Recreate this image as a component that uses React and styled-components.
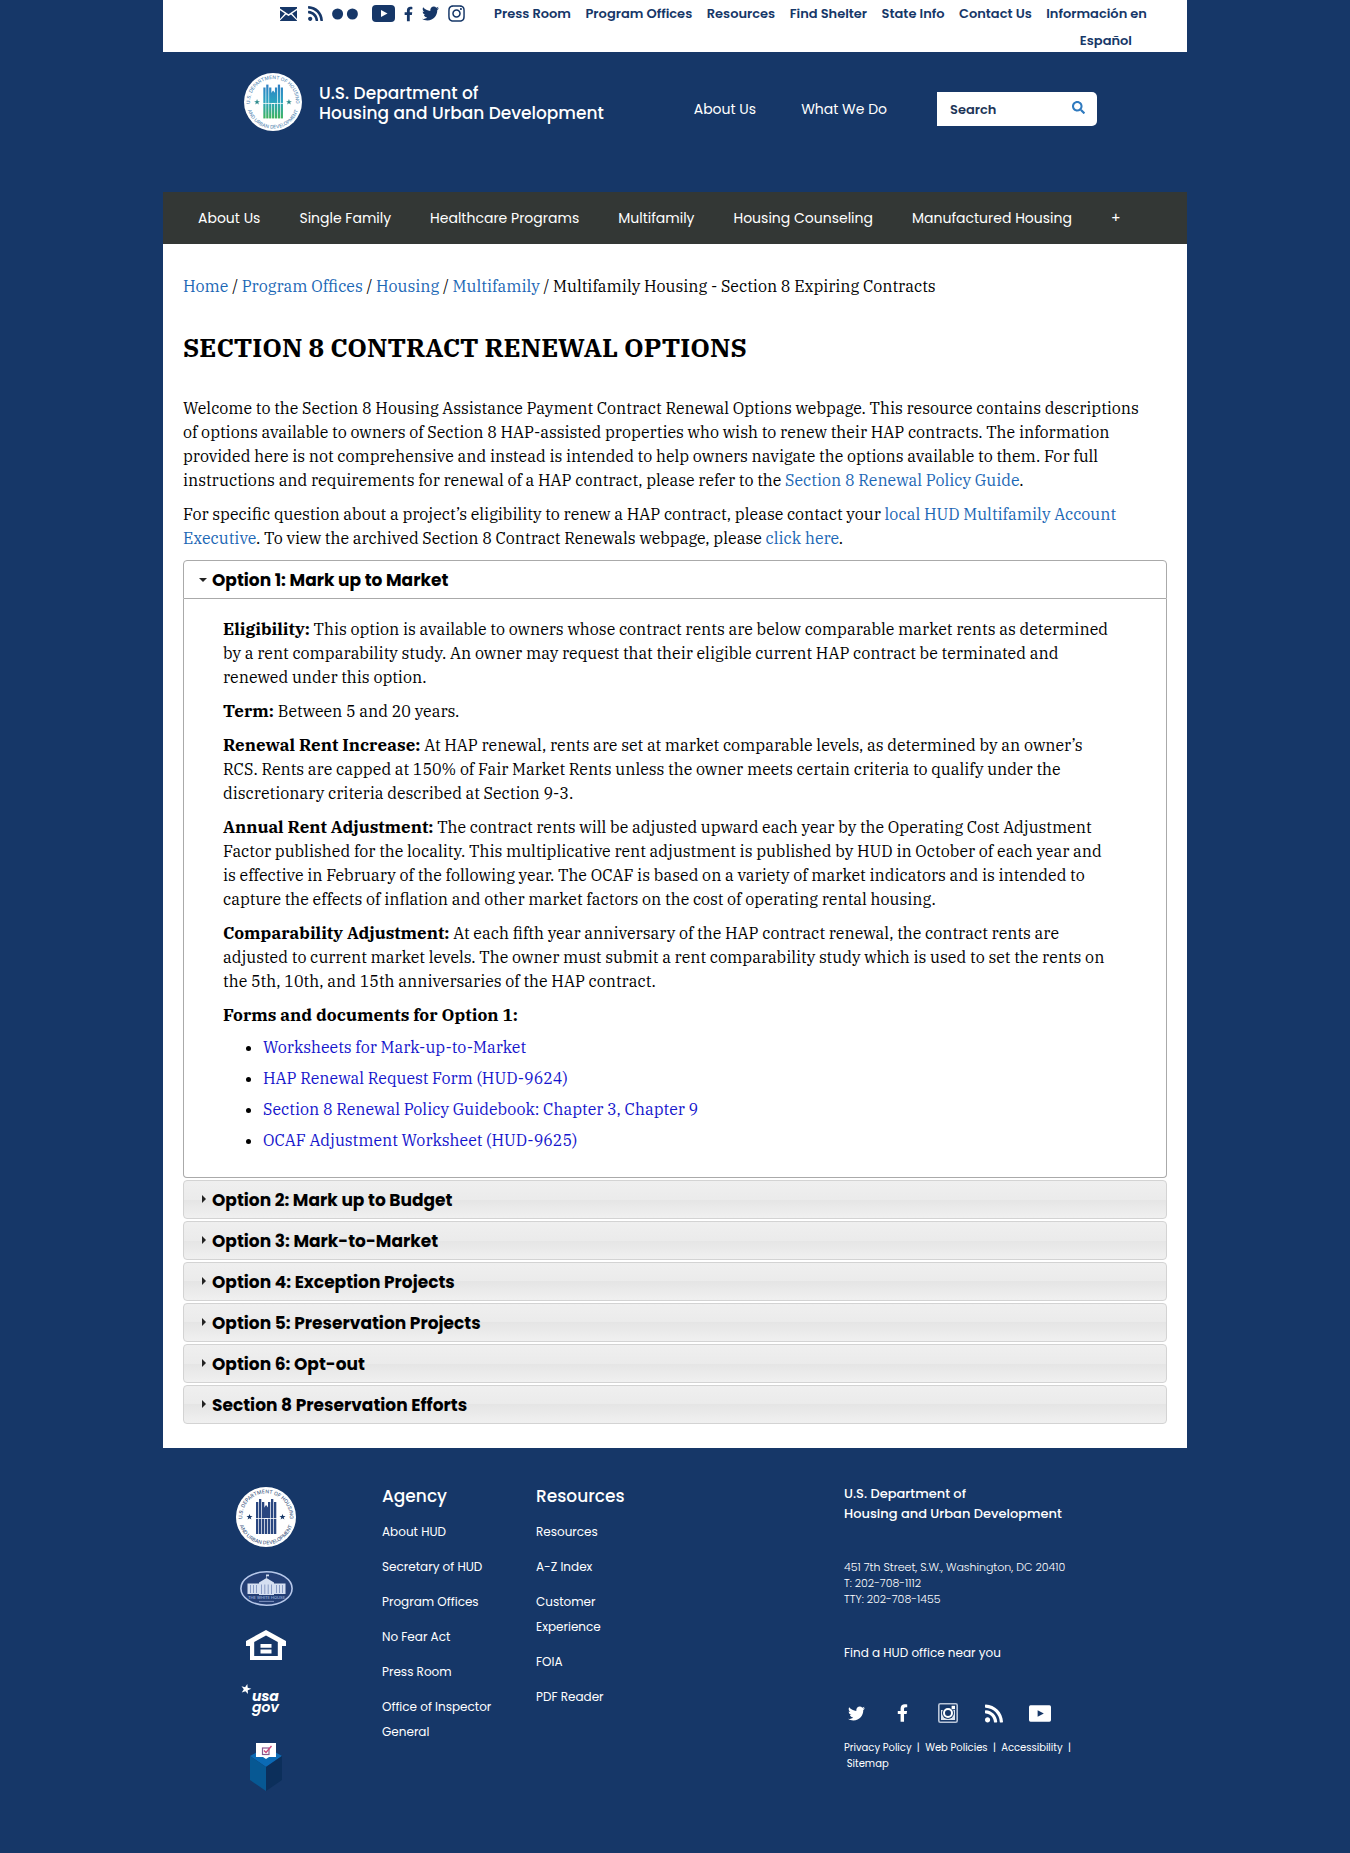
import React, { useState } from "react";
import styled, { createGlobalStyle, css } from "styled-components";
import {
  FaFacebookF,
  FaInstagram,
  FaRss,
  FaSearch,
  FaTwitter,
} from "react-icons/fa";

const navy = "#163768";
const linkBlue = "#1b67b5";
const sans = `Poppins, Inter, "Open Sans", sans-serif`;
const serif = `"IBM Plex Serif", "DejaVu Serif Condensed", "Liberation Serif", serif`;

const GlobalStyle = createGlobalStyle`
  *, *::before, *::after { box-sizing: border-box; }
  body {
    margin: 0;
    background: ${navy};
    color: #000;
    font-family: ${serif};
    font-size: 16px;
    line-height: 24px;
  }
  a { text-decoration: none; }
  a:hover { text-decoration: underline; }
`;

const Page = styled.div`
  max-width: 1024px;
  margin: 0 auto;
`;

const plainList = css`
  list-style: none;
  margin: 0;
  padding: 0;
`;

/* ---------- utility bar ---------- */

const UtilityBar = styled.div`
  display: flex;
  align-items: flex-start;
  gap: 29px;
  height: 52px;
  padding-left: 117px;
  padding-right: 40px;
  background: #fff;
  color: ${navy};
`;

const SocialList = styled.ul`
  ${plainList}
  display: flex;
  align-items: center;
  gap: 9px;
  height: 27px;

  a {
    display: block;
    color: inherit;
  }
  svg {
    display: block;
  }
`;

const IconSlot = styled.li`
  svg {
    width: ${(p) => p.$w}px;
    height: ${(p) => p.$h}px;
  }
`;

const UtilityLinks = styled.ul`
  ${plainList}
  flex: 1;
  display: flex;
  justify-content: space-between;
  font: 600 13px/27px ${sans};
  white-space: nowrap;

  a {
    color: inherit;
  }
`;

const TwoLineItem = styled.li`
  text-align: right;

  a {
    padding-right: 15px;
  }
`;

/* ---------- masthead ---------- */

const Masthead = styled.header`
  display: flex;
  align-items: flex-start;
  justify-content: space-between;
  min-height: 140px;
  padding: 21px 90px 20px 81px;
  color: #fff;
  font-family: ${sans};
`;

const Brand = styled.a`
  display: flex;
  align-items: center;
  gap: 17px;
  color: #fff;
  font-weight: 500;
  font-size: 17px;
  line-height: 20px;
`;

const BrandName = styled.span`
  padding-top: 2px;
`;

const MastheadTools = styled.div`
  display: flex;
  align-items: center;
  gap: 50px;
  margin-top: 19px;
`;

const MainMenu = styled.nav`
  display: flex;
  gap: 45px;
  font-size: 14px;

  a {
    color: #fff;
  }
`;

const SearchForm = styled.form`
  display: flex;
  width: 160px;
  height: 34px;
  border-radius: 0 5px 5px 0;
  background: #fff;
  overflow: hidden;
`;

const SearchInput = styled.input`
  flex: 1;
  min-width: 0;
  padding: 2px 0 0 13px;
  border: 0;
  background: transparent;
  color: ${navy};
  font: 600 13px/20px ${sans};

  &::placeholder {
    color: #1d3557;
    opacity: 1;
  }
`;

const SearchButton = styled.button`
  display: grid;
  place-items: center;
  width: 38px;
  padding: 0 0 3px;
  border: 0;
  background: transparent;
  color: #2f7abf;
  font-size: 13px;
  cursor: pointer;
`;

const SectionNav = styled.nav`
  display: flex;
  gap: 39px;
  padding: 0 35px;
  background: #333735;
  font: 400 14px/52px ${sans};

  a {
    color: #fff;
  }
`;

/* ---------- content ---------- */

const Content = styled.main`
  padding: 30px 20px 24px;
  background: #fff;
`;

const TextLink = styled.a`
  color: ${linkBlue};
`;

const Title = styled.h1`
  margin: 33px 0;
  font-size: 26px;
  line-height: 32px;
  font-weight: 700;
`;

const Paragraph = styled.p`
  margin: 0 0 10px;
  padding-right: 12px;
`;

const Label = styled.strong`
  font-size: 17px;
  font-weight: 700;
`;

const Accordion = styled.div`
  display: flex;
  flex-direction: column;
  gap: 2px;
`;

const AccordionHeading = styled.h2`
  margin: 0;
  font: inherit;
`;

const AccordionButton = styled.button`
  display: flex;
  align-items: center;
  gap: 4px;
  width: 100%;
  height: 39px;
  padding: 0 14px;
  border: 1px solid ${(p) => (p.$open ? "#aaa" : "#d3d3d3")};
  border-radius: ${(p) => (p.$open ? "4px 4px 0 0" : "4px")};
  background: ${(p) =>
    p.$open
      ? "#fff"
      : "linear-gradient(#efefef, #ebebeb 50%, #e5e5e5 50%, #f0f0f0)"};
  color: #000;
  font: 700 17px/24px ${sans};
  text-align: left;
  cursor: pointer;
`;

const Caret = styled.svg`
  width: 10px;
  height: 10px;
  margin-bottom: 2px;
  fill: #222;
  transform: rotate(${(p) => (p.$open ? "90deg" : "0deg")});
`;

const Panel = styled.div`
  padding: 18px 39px 25px;
  border: 1px solid #aaa;
  border-top: 0;
  border-radius: 0 0 4px 4px;
`;

const DocumentList = styled.ul`
  display: flex;
  flex-direction: column;
  gap: 7px;
  margin: -2px 0 0;
  padding-left: 40px;

  a {
    color: #1414cc;
  }
`;

/* ---------- footer ---------- */

const Footer = styled.footer`
  display: grid;
  grid-template-columns: 146px 154px 308px 1fr;
  padding: 36px 0 50px 73px;
  color: #fff;
  font-family: ${sans};

  a {
    color: #fff;
  }
`;

const LogoStack = styled.div`
  display: flex;
  flex-direction: column;
  align-items: center;
  gap: 24px;
  width: 60px;
  padding-top: 3px;

  svg {
    display: block;
  }
`;

const FooterHeading = styled.h3`
  margin: 0 0 10px;
  font-weight: 500;
  font-size: 17px;
  line-height: 25px;
`;

const FooterLinks = styled.ul`
  ${plainList}
  display: flex;
  flex-direction: column;
  gap: 10px;
  max-width: 120px;
  font-size: 12px;
  line-height: 25px;
`;

const Contact = styled.div`
  max-width: 240px;
`;

const ContactName = styled.p`
  margin: 0 0 35px;
  font-weight: 500;
  font-size: 13px;
  line-height: 20px;
`;

const Address = styled.address`
  margin: 0 0 36px;
  font: 300 11px/16px ${sans};
`;

const OfficeFinder = styled.p`
  margin: 0 0 39px;
  font-size: 12px;
  line-height: 20px;
`;

const FooterSocial = styled.ul`
  ${plainList}
  display: grid;
  grid-template-columns: repeat(5, 24px);
  justify-items: center;
  align-items: center;
  gap: 22px;
  height: 22px;
  margin-bottom: 16px;

  svg {
    display: block;
  }
`;

const LegalLinks = styled.p`
  margin: 0;
  font-size: 10px;
  line-height: 16px;
`;

/* ---------- drawings ---------- */

const EnvelopeIcon = () => (
  <svg viewBox="0 0 19 14" fill={navy} aria-hidden="true">
    <path d="M0 0H17V1.4L8.5 7.2L0 1.4Z" />
    <path d="M0 3.2L4.9 6.6L0 12Z" />
    <path d="M17 3.2L12.1 6.6L17 12Z" />
    <path d="M6 7.4L8.5 9.1L11 7.4L17 13.4V14H0V13.4Z" />
  </svg>
);

const FlickrIcon = () => (
  <svg viewBox="0 0 31 12" fill={navy} aria-hidden="true">
    <circle cx="5.6" cy="6" r="5.5" />
    <circle cx="20.4" cy="6" r="5.5" />
  </svg>
);

const YoutubeIcon = ({ cut }) => (
  <svg viewBox="0 0 23 17" aria-hidden="true">
    <rect width="23" height="17" rx={cut === "#fff" ? 4 : 1.6} fill="currentColor" />
    <path d="M9 5L15.5 8.5L9 12Z" fill={cut} />
  </svg>
);

const CameraIcon = () => (
  <svg viewBox="0 0 20 20" aria-hidden="true">
    <rect x="0.8" y="0.8" width="18.4" height="18.4" rx="1.5" fill={navy} stroke="#b9c5d8" strokeWidth="1.6" />
    <path d="M3 7H17V17H3Z" fill="#dfe6f0" />
    <circle cx="10" cy="10" r="6" fill={navy} />
    <circle cx="10" cy="10" r="4" fill="none" stroke="#fff" strokeWidth="2" />
    <rect x="13.6" y="2.8" width="3.4" height="3.4" fill="#fff" />
  </svg>
);

const star = "M0 -3L0.8 -0.9L3 -0.9L1.2 0.5L1.9 2.6L0 1.3L-1.9 2.6L-1.2 0.5L-3 -0.9L-0.8 -0.9Z";

/* Department seal: ring lettering, two stars and a building of vertical bars. */
function Seal({ id, size, ink, bars, starInk }) {
  const columns = [
    [20, 15],
    [23, 12],
    [26, 15],
    [32, 15],
    [35, 12],
    [38, 15],
  ];
  return (
    <svg width={size} height={size} viewBox="0 0 60 60" role="img" aria-label="HUD seal">
      <defs>
        <linearGradient id={`${id}-bars`} gradientUnits="userSpaceOnUse" x1="0" y1="12" x2="0" y2="47">
          <stop offset="0" stopColor={bars[0]} />
          <stop offset="0.5" stopColor={bars[1]} />
          <stop offset="1" stopColor={bars[2]} />
        </linearGradient>
        <path id={`${id}-top`} d="M10.2 43A23.7 23.7 0 1 1 49.8 43" />
        <path id={`${id}-bottom`} d="M2.5 30A27.5 27.5 0 0 0 57.5 30" />
      </defs>
      <circle cx="30" cy="30" r="30" fill="#fff" />
      <g fill={ink} fontFamily="Inter, sans-serif" fontSize="5" fontWeight="500">
        <text textAnchor="middle">
          <textPath href={`#${id}-top`} startOffset="50%">U.S. DEPARTMENT OF HOUSING</textPath>
        </text>
        <text textAnchor="middle">
          <textPath href={`#${id}-bottom`} startOffset="50%">AND URBAN DEVELOPMENT</textPath>
        </text>
      </g>
      <g fill={`url(#${id}-bars)`}>
        {columns.map(([x, y]) => (
          <rect key={x} x={x} y={y} width="2.3" height={47 - y} />
        ))}
        <rect x="29" y="32" width="2.3" height="15" />
        <path d="M27.8 31V21L30.1 18L32.4 21V31Z" />
      </g>
      <path d="M19.5 31.5H41" stroke="#fff" strokeWidth="0.8" />
      <path d={star} fill={starInk} transform="translate(13.5 30)" />
      <path d={star} fill={starInk} transform="translate(46.5 30)" />
    </svg>
  );
}

const WhiteHouseLogo = () => (
  <svg width="53" height="35" viewBox="0 0 53 35" role="img" aria-label="The White House">
    <ellipse cx="26.5" cy="17.5" rx="25.6" ry="16.7" fill="#243f75" stroke="#b7c8ea" strokeWidth="1.6" />
    <g fill="#d5dff1">
      <path d="M7.5 12.5H45.5V23H7.5Z" />
      <path d="M19 11.5L26.5 7L34 11.5V24H19Z" />
      <path d="M26 3.6H29V5.2H26.6V7H26Z" />
    </g>
    <path
      d="M10.5 14V22M13.5 14V22M16.5 14V22M21.5 13.5V23M24.8 13.5V23M28.2 13.5V23M31.5 13.5V23M36.5 14V22M39.5 14V22M42.5 14V22"
      stroke="#7f93c0"
      strokeWidth="0.9"
    />
    <text x="26.5" y="28" textAnchor="middle" fontFamily="Inter, sans-serif" fontSize="4" fill="#b7c8ea">
      THE WHITE HOUSE
    </text>
    <path d="M19 30.4H34" stroke="#7f93c0" strokeWidth="1" />
  </svg>
);

const EqualHousingLogo = () => (
  <svg width="40" height="30" viewBox="0 0 40 30" role="img" aria-label="Equal housing opportunity">
    <path
      fill="#fff"
      fillRule="evenodd"
      d="M20 0L40 11V16H36V30H4V16H0V11ZM20 5.4L8.2 12V26H31.8V12Z"
    />
    <path fill="#fff" d="M14.5 14H25.5V17.8H14.5ZM14.5 19.6H25.5V23.4H14.5Z" />
  </svg>
);

const UsaGovLogo = () => (
  <svg width="50" height="35" viewBox="0 0 50 35" role="img" aria-label="USA.gov">
    <path d={star} fill="#fff" transform="translate(5 5) rotate(15) scale(1.7)" />
    <g fill="#fff" fontFamily={sans} fontStyle="italic">
      <text x="11" y="17" fontSize="14" fontWeight="700">usa</text>
      <text x="11" y="28" fontSize="14" fontWeight="600">gov</text>
    </g>
  </svg>
);

const BallotBoxLogo = () => (
  <svg width="34" height="48" viewBox="0 0 34 48" role="img" aria-label="Vote">
    <path d="M1 13L17 4L33 13L17 24Z" fill="#0b6ab5" />
    <path d="M1 13L17 24V48L1 37Z" fill="#075893" />
    <path d="M33 13L17 24V48L33 37Z" fill="#0c2f5b" />
    <path d="M7 0H27V14H20L17 16L14 14H7Z" fill="#fff" />
    <rect x="13.5" y="5" width="6.5" height="6.5" fill="none" stroke="#8a5a8f" strokeWidth="1.2" />
    <path d="M15 7.5L17 9.5L22.5 3" fill="none" stroke="#d0487c" strokeWidth="1.4" />
  </svg>
);

/* ---------- data ---------- */

const utilityLinks = [
  "Press Room",
  "Program Offices",
  "Resources",
  "Find Shelter",
  "State Info",
  "Contact Us",
];

const sectionLinks = [
  "About Us",
  "Single Family",
  "Healthcare Programs",
  "Multifamily",
  "Housing Counseling",
  "Manufactured Housing",
  "+",
];

const crumbs = ["Home", "Program Offices", "Housing", "Multifamily"];

const agencyLinks = [
  "About HUD",
  "Secretary of HUD",
  "Program Offices",
  "No Fear Act",
  "Press Room",
  "Office of Inspector General",
];

const resourceLinks = [
  "Resources",
  "A-Z Index",
  "Customer Experience",
  "FOIA",
  "PDF Reader",
];

const markUpToMarket = [
  [
    "Eligibility:",
    "This option is available to owners whose contract rents are below comparable market rents as determined by a rent comparability study. An owner may request that their eligible current HAP contract be terminated and renewed under this option.",
  ],
  ["Term:", "Between 5 and 20 years."],
  [
    "Renewal Rent Increase:",
    "At HAP renewal, rents are set at market comparable levels, as determined by an owner’s RCS. Rents are capped at 150% of Fair Market Rents unless the owner meets certain criteria to qualify under the discretionary criteria described at Section 9-3.",
  ],
  [
    "Annual Rent Adjustment:",
    "The contract rents will be adjusted upward each year by the Operating Cost Adjustment Factor published for the locality. This multiplicative rent adjustment is published by HUD in October of each year and is effective in February of the following year. The OCAF is based on a variety of market indicators and is intended to capture the effects of inflation and other market factors on the cost of operating rental housing.",
  ],
  [
    "Comparability Adjustment:",
    "At each fifth year anniversary of the HAP contract renewal, the contract rents are adjusted to current market levels. The owner must submit a rent comparability study which is used to set the rents on the 5th, 10th, and 15th anniversaries of the HAP contract.",
  ],
];

const documents = [
  "Worksheets for Mark-up-to-Market",
  "HAP Renewal Request Form (HUD-9624)",
  "Section 8 Renewal Policy Guidebook: Chapter 3, Chapter 9",
  "OCAF Adjustment Worksheet (HUD-9625)",
];

const MarkUpToMarket = () => (
  <Panel>
    {markUpToMarket.map(([label, text]) => (
      <Paragraph key={label}>
        <Label>{label}</Label> {text}
      </Paragraph>
    ))}
    <Paragraph>
      <Label>Forms and documents for Option 1:</Label>
    </Paragraph>
    <DocumentList>
      {documents.map((name) => (
        <li key={name}>
          <a href="#document">{name}</a>
        </li>
      ))}
    </DocumentList>
  </Panel>
);

const options = [
  { title: "Option 1: Mark up to Market", Body: MarkUpToMarket },
  { title: "Option 2: Mark up to Budget" },
  { title: "Option 3: Mark-to-Market" },
  { title: "Option 4: Exception Projects" },
  { title: "Option 5: Preservation Projects" },
  { title: "Option 6: Opt-out" },
  { title: "Section 8 Preservation Efforts" },
];

function SocialLink({ label, w, h, children }) {
  return (
    <IconSlot $w={w} $h={h}>
      <a href="#social" aria-label={label}>
        {children}
      </a>
    </IconSlot>
  );
}

function LinkColumn({ heading, links }) {
  return (
    <div>
      <FooterHeading>{heading}</FooterHeading>
      <FooterLinks>
        {links.map((name) => (
          <li key={name}>
            <a href="#footer">{name}</a>
          </li>
        ))}
      </FooterLinks>
    </div>
  );
}

export default function App() {
  const [open, setOpen] = useState(0);

  return (
    <Page>
      <GlobalStyle />
      <UtilityBar>
        <SocialList>
          <SocialLink label="Email" w={19} h={14}><EnvelopeIcon /></SocialLink>
          <SocialLink label="RSS" w={15} h={17}><FaRss /></SocialLink>
          <SocialLink label="Flickr" w={31} h={12}><FlickrIcon /></SocialLink>
          <SocialLink label="YouTube" w={23} h={17}><YoutubeIcon cut="#fff" /></SocialLink>
          <SocialLink label="Facebook" w={9} h={16}><FaFacebookF /></SocialLink>
          <SocialLink label="Twitter" w={17} h={17}><FaTwitter /></SocialLink>
          <SocialLink label="Instagram" w={17} h={19}><FaInstagram /></SocialLink>
        </SocialList>
        <UtilityLinks>
          {utilityLinks.map((name) => (
            <li key={name}>
              <a href="#utility">{name}</a>
            </li>
          ))}
          <TwoLineItem>
            <a href="#espanol" lang="es">
              Información en
              <br />
              Español
            </a>
          </TwoLineItem>
        </UtilityLinks>
      </UtilityBar>

      <Masthead>
        <Brand href="#home">
          <Seal id="seal-top" size={58} ink="#5f8fb8" starInk="#2c8a8c" bars={["#2f7fc4", "#2aa3c0", "#3fb45c"]} />
          <BrandName>
            U.S. Department of
            <br />
            Housing and Urban Development
          </BrandName>
        </Brand>
        <MastheadTools>
          <MainMenu>
            <a href="#about">About Us</a>
            <a href="#what">What We Do</a>
          </MainMenu>
          <SearchForm role="search" onSubmit={(e) => e.preventDefault()}>
            <SearchInput type="text" placeholder="Search" aria-label="Search" />
            <SearchButton type="submit" aria-label="Submit search">
              <FaSearch />
            </SearchButton>
          </SearchForm>
        </MastheadTools>
      </Masthead>

      <SectionNav>
        {sectionLinks.map((name) => (
          <a key={name} href="#section">{name}</a>
        ))}
      </SectionNav>

      <Content>
        <nav aria-label="Breadcrumb">
          {crumbs.map((name) => (
            <React.Fragment key={name}>
              <TextLink href="#crumb">{name}</TextLink>
              {" / "}
            </React.Fragment>
          ))}
          Multifamily Housing - Section 8 Expiring Contracts
        </nav>
        <Title>SECTION 8 CONTRACT RENEWAL OPTIONS</Title>
        <Paragraph>
          Welcome to the Section 8 Housing Assistance Payment Contract Renewal Options webpage.
          This resource contains descriptions of options available to owners of Section 8
          HAP-assisted properties who wish to renew their HAP contracts. The information provided
          here is not comprehensive and instead is intended to help owners navigate the options
          available to them. For full instructions and requirements for renewal of a HAP contract,
          please refer to the <TextLink href="#guide">Section 8 Renewal Policy Guide</TextLink>.
        </Paragraph>
        <Paragraph>
          For specific question about a project’s eligibility to renew a HAP contract, please
          contact your{" "}
          <TextLink href="#executive">local HUD Multifamily Account Executive</TextLink>. To view
          the archived Section 8 Contract Renewals webpage, please{" "}
          <TextLink href="#archive">click here</TextLink>.
        </Paragraph>

        <Accordion>
          {options.map(({ title, Body }, index) => {
            const isOpen = open === index;
            return (
              <section key={title}>
                <AccordionHeading>
                  <AccordionButton
                    type="button"
                    $open={isOpen}
                    aria-expanded={isOpen}
                    onClick={() => setOpen(isOpen ? -1 : index)}
                  >
                    <Caret viewBox="0 0 10 10" $open={isOpen} aria-hidden="true">
                      <path d="M4 1L8 5L4 9Z" />
                    </Caret>
                    {title}
                  </AccordionButton>
                </AccordionHeading>
                {isOpen && Body && <Body />}
              </section>
            );
          })}
        </Accordion>
      </Content>

      <Footer>
        <LogoStack>
          <Seal id="seal-foot" size={60} ink="#4a5f88" starInk={navy} bars={["#2a4780", "#2a4780", "#2a4780"]} />
          <WhiteHouseLogo />
          <EqualHousingLogo />
          <UsaGovLogo />
          <BallotBoxLogo />
        </LogoStack>
        <LinkColumn heading="Agency" links={agencyLinks} />
        <LinkColumn heading="Resources" links={resourceLinks} />
        <Contact>
          <ContactName>
            U.S. Department of
            <br />
            Housing and Urban Development
          </ContactName>
          <Address>
            451 7th Street, S.W., Washington, DC 20410
            <br />
            T: 202-708-1112
            <br />
            TTY: 202-708-1455
          </Address>
          <OfficeFinder>
            <a href="#offices">Find a HUD office near you</a>
          </OfficeFinder>
          <FooterSocial>
            <SocialLink label="Twitter" w={17} h={17}><FaTwitter /></SocialLink>
            <SocialLink label="Facebook" w={11} h={18}><FaFacebookF /></SocialLink>
            <SocialLink label="Instagram" w={20} h={20}><CameraIcon /></SocialLink>
            <SocialLink label="RSS" w={18} h={21}><FaRss /></SocialLink>
            <SocialLink label="YouTube" w={22} h={17}><YoutubeIcon cut={navy} /></SocialLink>
          </FooterSocial>
          <LegalLinks>
            <a href="#privacy">Privacy Policy</a>
            {"\u00a0\u00a0| \u00a0"}
            <a href="#web">Web Policies</a>
            {"\u00a0\u00a0| \u00a0"}
            <a href="#accessibility">Accessibility</a>
            {"\u00a0\u00a0| \u00a0"}
            <a href="#sitemap">Sitemap</a>
          </LegalLinks>
        </Contact>
      </Footer>
    </Page>
  );
}
